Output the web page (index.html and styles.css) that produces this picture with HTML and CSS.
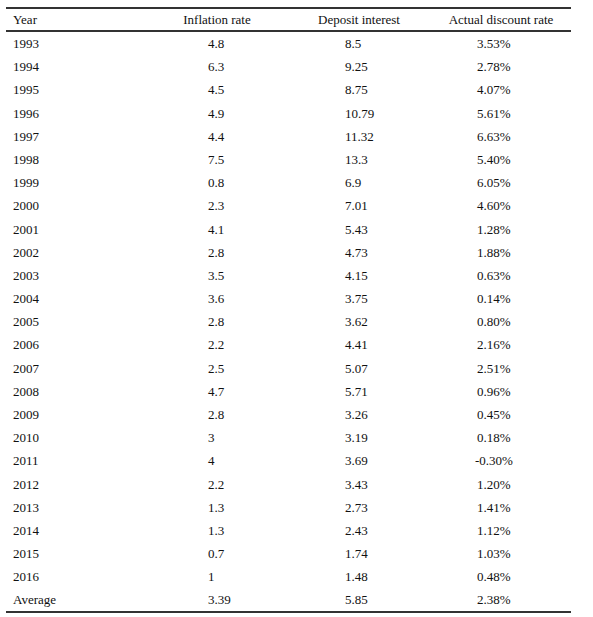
FILE: index.html
```html
<!DOCTYPE html>
<html lang="en">
  <head>
    <meta charset="UTF-8" />
    <meta name="viewport" content="width=device-width, initial-scale=1.0" />
    <title>Actual discount rate</title>
    <link rel="stylesheet" href="styles.css">
  </head>
  <body>
    <div class="rate-table" id="table">
      <div class="head">Year</div>
      <div class="head center">Inflation rate</div>
      <div class="head center">Deposit interest</div>
      <div class="head center last">Actual discount rate</div>
    </div>

    <script>
      const rows = [
        ["1993", "4.8", "8.5", "3.53%"],
        ["1994", "6.3", "9.25", "2.78%"],
        ["1995", "4.5", "8.75", "4.07%"],
        ["1996", "4.9", "10.79", "5.61%"],
        ["1997", "4.4", "11.32", "6.63%"],
        ["1998", "7.5", "13.3", "5.40%"],
        ["1999", "0.8", "6.9", "6.05%"],
        ["2000", "2.3", "7.01", "4.60%"],
        ["2001", "4.1", "5.43", "1.28%"],
        ["2002", "2.8", "4.73", "1.88%"],
        ["2003", "3.5", "4.15", "0.63%"],
        ["2004", "3.6", "3.75", "0.14%"],
        ["2005", "2.8", "3.62", "0.80%"],
        ["2006", "2.2", "4.41", "2.16%"],
        ["2007", "2.5", "5.07", "2.51%"],
        ["2008", "4.7", "5.71", "0.96%"],
        ["2009", "2.8", "3.26", "0.45%"],
        ["2010", "3", "3.19", "0.18%"],
        ["2011", "4", "3.69", "-0.30%"],
        ["2012", "2.2", "3.43", "1.20%"],
        ["2013", "1.3", "2.73", "1.41%"],
        ["2014", "1.3", "2.43", "1.12%"],
        ["2015", "0.7", "1.74", "1.03%"],
        ["2016", "1", "1.48", "0.48%"],
        ["Average", "3.39", "5.85", "2.38%"]
      ];
      const classes = ["year", "inflation", "deposit", "actual"];
      const table = document.getElementById("table");

      rows.forEach((row, i) => {
        row.forEach((value, j) => {
          const cell = document.createElement("div");
          cell.className = "cell " + classes[j];
          if (i === rows.length - 1) cell.classList.add("bottom");
          if (value.startsWith("-")) cell.classList.add("negative");
          cell.textContent = value;
          table.appendChild(cell);
        });
      });
    </script>
  </body>
</html>
```

FILE: styles.css
```css
body {
  margin: 0;
  background: #fff;
  color: #111;
  font-family: "Liberation Serif", "Times New Roman", serif;
  font-size: 13px;
}
.rate-table {
  display: grid;
  grid-template-columns: 144px 134px 150px 137px;
  width: 565px;
  margin: 7px 0 0 6px;
  border-top: 2px solid #333;
}
.head {
  height: 21px;
  line-height: 21px;
  border-bottom: 2px solid #333;
  padding-left: 7px;
}
.head.center {
  padding-left: 0;
  text-align: center;
}
.head.last {
  padding-right: 3px;
}
.cell {
  height: 23.2px;
  line-height: 23.2px;
  white-space: nowrap;
}
.cell.bottom {
  border-bottom: 2px solid #333;
  height: 22px;
  line-height: 22px;
}
.year {
  padding-left: 7px;
}
.inflation {
  padding-left: 58px;
}
.deposit {
  padding-left: 61px;
}
.actual {
  padding-left: 43px;
}
.actual.negative {
  padding-left: 41px;
}
```
